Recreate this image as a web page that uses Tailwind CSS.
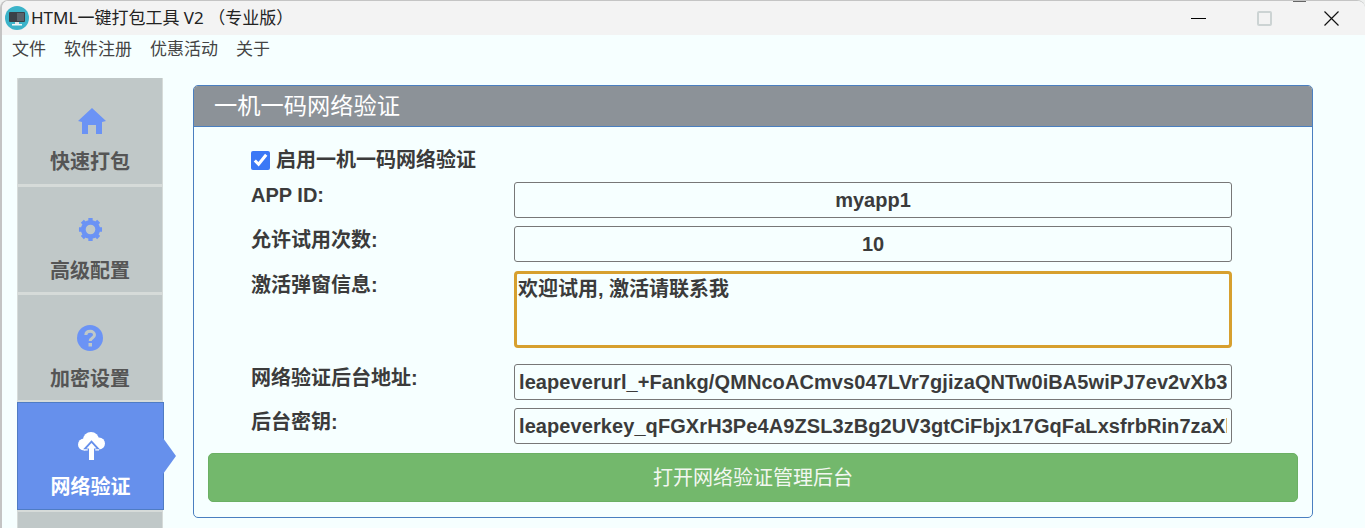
<!DOCTYPE html>
<html lang="zh">
<head>
  <meta charset="UTF-8" />
  <title>HTML一键打包工具 V2</title>
  <script src="https://cdn.jsdelivr.net/npm/@tailwindcss/browser@4"></script>
</head>
<body class="bg-[#eef0ef] overflow-hidden font-['Liberation_Sans','Noto_Sans_CJK_SC',sans-serif]">
<div class="relative h-[528px] w-[1365px] flex flex-col bg-[#f6ffff] border-l-2 border-t border-[#c4c4c4] rounded-t-[8px] overflow-hidden">

  <!-- title bar -->
  <header class="h-[34px] shrink-0 bg-[#f3f3f3] flex items-center pl-[3px] text-[#222]">
    <svg class="w-[24px] h-[24px]" viewBox="0 0 24 24">
      <circle cx="12" cy="12" r="12" fill="#3bb3c9"/>
      <rect x="4" y="6" width="16" height="10" rx="1" fill="#3a4148"/>
      <rect x="12" y="7" width="7" height="8" fill="#59626a"/>
      <rect x="10" y="16" width="4" height="2" fill="#dfe6e9"/>
      <rect x="7" y="18" width="10" height="1.500" fill="#f4f7f8"/>
    </svg>
    <span class="ml-[2px] text-[17px] font-['Noto_Sans','Noto_Sans_CJK_SC',sans-serif]">HTML一键打包工具 V2 （专业版）</span>
    <div class="ml-auto flex items-center">
      <div class="w-[15px] h-px bg-black mr-[51px]"></div>
      <div class="w-[15px] h-[15px] border-2 border-[#ccd3d3] rounded-[2px] mr-[52px]"></div>
      <svg class="w-[15px] h-[15px] mr-[26px]" viewBox="0 0 15 15" stroke="#111" stroke-width="1.200"><path d="M0.500 0.500 14.500 14.500M14.500 0.500 0.500 14.500"/></svg>
    </div>
  </header>

  <!-- menu -->
  <nav class="h-[26px] shrink-0 flex items-center gap-[18px] pl-[10px] text-[17px] text-[#444] font-['Noto_Sans_CJK_SC',sans-serif]">
    <span>文件</span><span>软件注册</span><span>优惠活动</span><span>关于</span>
  </nav>

  <main class="flex flex-1 items-start pl-[15px] pt-[17px]">
    <!-- sidebar -->
    <aside class="w-[146px] shrink-0 flex flex-col bg-[#d6dbd9] text-[20px] font-bold text-[#555]">
      <div class="h-[106px] bg-[#c0c8c8] border-x border-[#d6dbd9] flex flex-col items-center pt-[30px] rounded-tl-[3px]">
        <svg class="w-[28px] h-[26px] ml-[3px]" viewBox="0 0 28 26" fill="#6b93f5"><path d="M14 0 28 13 24 14V26H18V17H10V26H4V14L0 13Z"/></svg>
        <span class="mt-[13px]">快速打包</span>
      </div>
      <div class="mt-[3px] h-[105px] bg-[#c0c8c8] border-x border-[#d6dbd9] flex flex-col items-center pt-[30px]">
        <svg class="w-[25px] h-[25px] text-[#6b93f5]" viewBox="0 0 26 26"><circle cx="13" cy="13" r="7.500" fill="none" stroke="currentColor" stroke-width="5"/><path d="M13 1V25M1 13H25M4.500 4.500 21.500 21.500M21.500 4.500 4.500 21.500" stroke="currentColor" stroke-width="4.500" stroke-dasharray="4.500 15 4.500" fill="none"/></svg>
        <span class="mt-[14px]">高级配置</span>
      </div>
      <div class="mt-[3px] h-[105px] bg-[#c0c8c8] border-x border-[#d6dbd9] flex flex-col items-center pt-[30px]">
        <svg class="w-[26px] h-[26px]" viewBox="0 0 26 26"><circle cx="13" cy="13" r="13" fill="#6b93f5"/><path d="M8.800 10C9 7.500 11 6.300 13.200 6.300 15.600 6.300 17.500 7.800 17.500 10 17.500 13 13.200 13 13.200 16" fill="none" stroke="#c0c8c8" stroke-width="3"/><rect x="11.500" y="18" width="3.500" height="3.500" fill="#c0c8c8"/></svg>
        <span class="mt-[13px]">加密设置</span>
      </div>
      <div class="relative mt-[2px] w-[147px] h-[108px] bg-[#6690ec] border border-[#4f7cc4] text-white flex flex-col items-center pt-[29px]">
        <svg class="w-[27px] h-[28px] ml-[2px]" viewBox="0 0 27 28">
          <g fill="#fff"><circle cx="6" cy="12.500" r="6"/><circle cx="13" cy="8" r="8"/><circle cx="21" cy="11.500" r="6"/><rect x="6" y="10" width="15" height="8.500"/></g>
          <path d="M13.500 10 19 16H16V28H11V16H8Z" fill="#fff" stroke="#6690ec" stroke-width="2.500"/>
          <path d="M13.500 11 18.500 16.500H16V28H11V16.500H8.500Z" fill="#fff"/>
        </svg>
        <span class="mt-[12px]">网络验证</span>
        <div class="absolute left-full top-[35px] w-[13px] h-[36px] bg-[#6690ec] [clip-path:polygon(0_0,100%_50%,0_100%)]"></div>
      </div>
      <div class="mt-[2px] h-[40px] bg-[#c0c8c8] border-x border-[#d6dbd9]"></div>
    </aside>

    <!-- panel -->
    <section class="ml-[30px] mt-[7px] w-[1120px] h-[433px] border border-[#4a7fc0] rounded-[5px] overflow-hidden flex flex-col">
      <h2 class="h-[41px] shrink-0 bg-[#8c9298] border-b border-[#4a7fc0] text-white text-[23.25px] font-normal pl-[20px] leading-[37px] font-['Noto_Sans_CJK_SC',sans-serif]">一机一码网络验证</h2>

      <div class="flex-1 flex flex-col pl-[57px] pr-[80px] pt-[21px] text-[20px] font-bold text-[#3b3b3b]">
        <label class="h-[24px] flex items-center gap-[6px]">
          <input type="checkbox" checked class="w-[19px] h-[19px] accent-[#3b78f6]" />
          <span>启用一机一码网络验证</span>
        </label>
        <div class="mt-[10px] flex h-[36px]">
          <span class="w-[263px] shrink-0 leading-[26px]">APP ID:</span>
          <input value="myapp1" class="w-[719px] h-[36px] border border-[#777] rounded-[3px] text-center text-[20px] font-bold outline-none" />
        </div>
        <div class="mt-[8px] flex h-[36px]">
          <span class="w-[263px] shrink-0 leading-[28px]">允许试用次数:</span>
          <input value="10" class="w-[719px] h-[36px] border border-[#777] rounded-[3px] text-center text-[20px] font-bold outline-none" />
        </div>
        <div class="mt-[9px] flex h-[77px]">
          <span class="w-[263px] shrink-0 leading-[28px]">激活弹窗信息:</span>
          <textarea class="w-[719px] h-[77px] border-[3px] border-[#d7a02f] rounded-[4px] px-[1px] text-[20px] font-bold outline-none resize-none">欢迎试用, 激活请联系我</textarea>
        </div>
        <div class="mt-[16px] flex h-[36px]">
          <span class="w-[263px] shrink-0 leading-[28px]">网络验证后台地址:</span>
          <input value="leapeverurl_+Fankg/QMNcoACmvs047LVr7gjizaQNTw0iBA5wiPJ7ev2vXb3" class="w-[719px] h-[36px] border border-[#777] rounded-[3px] px-[4px] text-[20px] tracking-[0.08px] font-bold outline-none" />
        </div>
        <div class="mt-[8px] flex h-[36px]">
          <span class="w-[263px] shrink-0 leading-[28px]">后台密钥:</span>
          <input value="leapeverkey_qFGXrH3Pe4A9ZSL3zBg2UV3gtCiFbjx17GqFaLxsfrbRin7zaXk" class="w-[719px] h-[36px] border border-[#777] rounded-[3px] px-[4px] text-[20px] tracking-[0.08px] font-bold outline-none" />
        </div>
        <button class="mt-[9px] -ml-[43px] w-[1090px] h-[49px] bg-[#73b86c] border border-[#6bb064] rounded-[5px] text-[20px] font-normal text-[#f2f7f0]">打开网络验证管理后台</button>
      </div>
    </section>
  </main>
  <div class="absolute top-0 left-[1291px] w-[13px] h-px bg-[#666]"></div>
</div>
</body>
</html>
